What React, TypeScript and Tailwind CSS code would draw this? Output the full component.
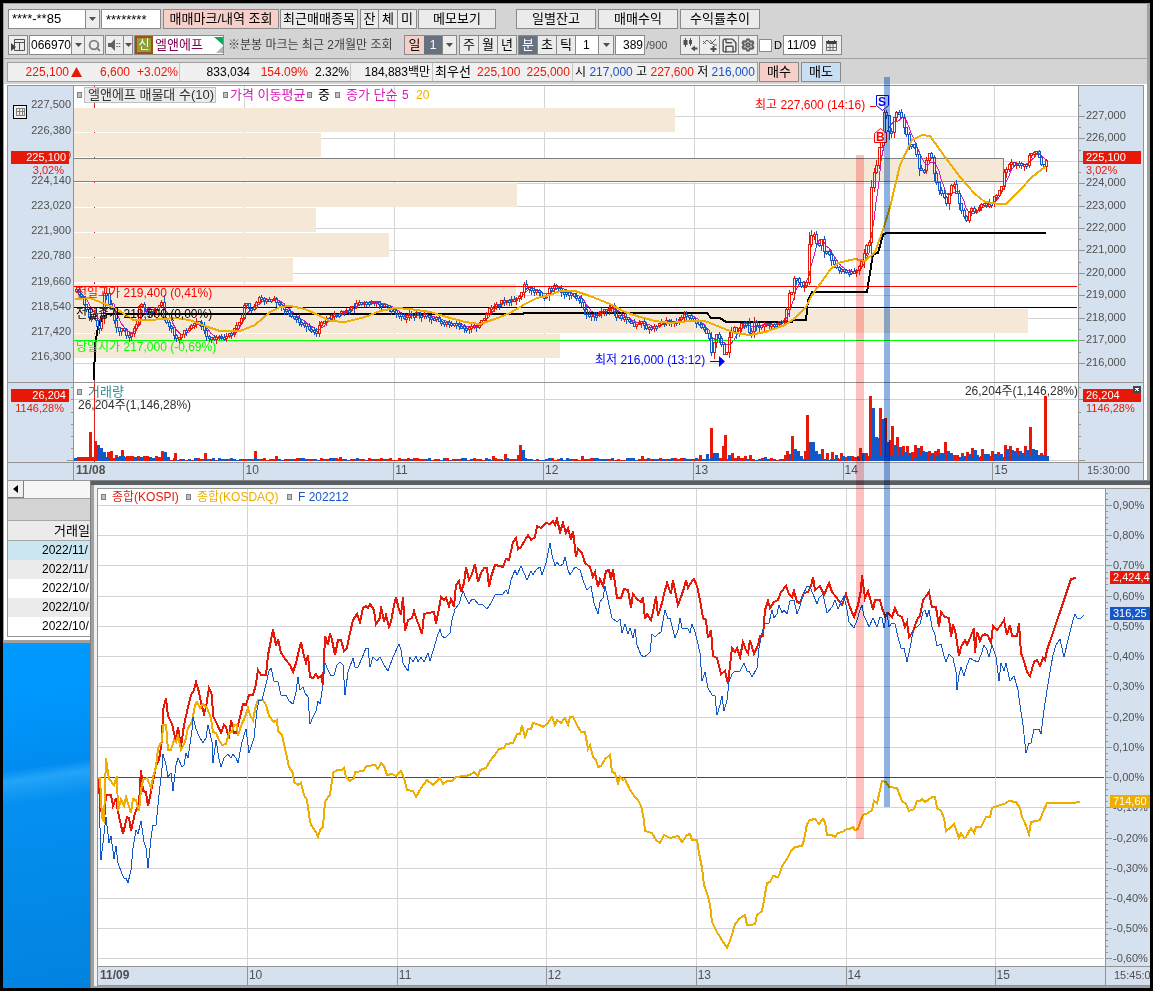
import React from "react";
import { Search, Save, Settings, CalendarDays } from "lucide-react";

type Point = [number, number];

const parse = (text: string): Point[] =>
  text
    .trim()
    .split(/\s+/)
    .map((pair) => pair.split(",").map(Number) as Point);

const toPath = (points: Point[]) => "M" + points.map(([x, y]) => `${x} ${y}`).join("L");

const valueAt = (points: Point[], x: number) => {
  if (x <= points[0][0]) return points[0][1];
  for (let i = 1; i < points.length; i++) {
    const [x1, y1] = points[i];
    if (x <= x1) {
      const [x0, y0] = points[i - 1];
      return y0 + ((y1 - y0) * (x - x0)) / (x1 - x0 || 1);
    }
  }
  return points[points.length - 1][1];
};

const noise = (n: number) => {
  const s = Math.sin(n * 12.9898) * 43758.5453;
  return s - Math.floor(s);
};

/* ---------- price chart data ---------- */

const CLOSES = parse(`75,290 79,292 82,300 85,305 88,318 91,316 94,314 97,324 100,330 102,300 105,288 107,300 110,303
113,318 116,325 120,333 122,322 124,330 128,337 132,331 136,325 138,308 141,304 146,312 152,310 157,307 161,303 164,318
170,325 176,338 182,333 188,328 194,323 198,322 203,330 208,338 215,337 225,338 232,332 240,322 243,308 246,303 250,310
254,307 259,299 265,300 275,300 282,308 290,315 300,321 308,328 316,331 322,322 328,318 340,312 350,308 360,303 375,301
385,306 395,312 402,317 415,313 425,315 440,320 455,325 470,327 478,325 485,317 490,306 500,303 507,298 518,300 521,290
523,284 528,287 535,291 545,297 550,288 553,286 560,290 570,294 580,300 585,312 590,315 600,312 608,308 611,305 615,315
625,318 633,325 640,322 648,328 655,325 665,321 675,322 682,316 690,316 698,322 703,328 708,335 711,350 714,340 716,333
720,340 723,356 726,352 730,335 733,322 737,334 740,325 746,323 750,334 754,322 758,327 765,323 775,325 785,320 787,300
789,292 791,292 793,278 797,280 803,288 806,280 808,248 812,230 815,237 818,250 821,240 825,252 830,256 835,266 840,270
850,271 858,270 861,260 865,248 869,243 871,186 874,170 877,160 880,138 883,116 885,110 887,120 890,137 893,118 896,111
900,110 903,125 907,135 910,147 913,141 916,155 920,170 924,168 928,150 932,160 937,188 943,195 947,207 950,185 954,184
958,200 962,214 966,218 970,208 975,212 980,204 990,205 995,195 1000,188 1005,168 1010,163 1020,163 1025,165 1030,155
1035,152 1039,156 1042,170 1046,159`);

const MA20 = parse(`75,299 90,298 100,302 110,306 120,311 133,320 150,320 175,318 190,320 205,326 220,331 240,331 255,325
270,312 280,307 290,306 305,309 320,316 330,321 345,322 365,317 380,311 395,308 410,309 430,312 450,318 465,322 480,324
495,319 510,313 525,304 537,298 550,295 560,291 575,291 590,296 610,304 625,312 640,317 655,321 670,323 690,321 705,321
720,327 735,333 750,335 765,332 785,325 795,318 806,307 812,295 820,284 830,270 838,263 855,259 865,261 875,252 883,230
890,207 900,165 912,140 922,135 930,136 945,157 960,177 975,194 985,202 1000,204 1006,204 1020,190 1032,177 1045,167`);

const BASELINE = parse(`94,380 95,345 98,327 102,318 107,314 523,314 524,313 707,313 711,318 720,318 726,322 792,322
793,320 806,320 808,300 812,292 867,292 873,254 878,253 883,235 886,233 1046,233`);

const PROFILE: [number, number][] = [
  [108, 675], [133, 321], [158, 1004], [183, 517], [208, 316],
  [233, 389], [258, 293], [284, 516], [309, 1028], [334, 560],
];

function buildCandles() {
  let up = "";
  let down = "";
  const closes: Point[] = [];
  let open = CLOSES[0][1];
  for (let i = 0; 76 + i * 2.5 <= 1046; i++) {
    const x = Math.round(76 + i * 2.5);
    const close = Math.round(valueAt(CLOSES, x) + (noise(i) - 0.5) * 4);
    const top = Math.min(open, close);
    const bottom = Math.max(open, close, top + 2);
    const high = top - Math.round(noise(i + 500) * (4 + (bottom - top) / 4));
    const low = bottom + Math.round(noise(i + 900) * (4 + (bottom - top) / 4));
    const shape = `M${x - 1} ${top}h2V${bottom}h-2ZM${x} ${high}V${top}M${x} ${bottom}V${low}`;
    if (close < open) up += shape;
    else down += shape;
    closes.push([x, close]);
    open = close;
  }
  const ma5: Point[] = closes.map(([x], i) => {
    const part = closes.slice(Math.max(0, i - 4), i + 1);
    return [x, part.reduce((sum, p) => sum + p[1], 0) / part.length];
  });
  return { up, down, ma5: toPath(ma5) };
}

const PEAKS: [number, number, number][] = [
  [90, 29, 1], [95, 20, 1], [98, 16, 0], [101, 13, 0], [104, 9, 0], [108, 9, 1], [111, 10, 1], [116, 6, 1], [122, 11, 1],
  [127, 5, 1], [162, 10, 1], [165, 9, 0], [175, 8, 1], [205, 8, 1], [255, 10, 1], [276, 5, 1], [340, 4, 1], [505, 7, 1],
  [493, 5, 1], [518, 6, 1], [520, 16, 1], [523, 11, 0], [582, 5, 1], [642, 5, 1], [700, 6, 1], [707, 7, 0], [711, 33, 1],
  [714, 8, 0], [717, 8, 0], [723, 15, 1], [725, 26, 1], [729, 6, 0], [732, 8, 1], [738, 5, 1], [745, 5, 1], [750, 6, 1],
  [765, 4, 0], [785, 6, 1], [787, 10, 1], [790, 7, 0], [792, 25, 1], [795, 12, 0], [798, 10, 0], [801, 5, 0], [805, 10, 1],
  [807, 46, 1], [810, 19, 0], [813, 19, 0], [816, 10, 0], [819, 7, 0], [822, 12, 1], [827, 8, 1], [832, 9, 1], [836, 6, 0],
  [841, 8, 1], [848, 5, 1], [858, 5, 1], [860, 13, 1], [863, 8, 0], [866, 8, 1], [870, 65, 1], [873, 53, 0], [876, 24, 0],
  [878, 23, 0], [880, 53, 1], [883, 42, 0], [885, 43, 1], [887, 19, 0], [890, 21, 1], [892, 35, 1], [895, 16, 0],
  [897, 24, 1], [900, 14, 0], [903, 15, 1], [905, 9, 0], [907, 15, 1], [910, 8, 0], [912, 9, 1], [915, 16, 1], [918, 13, 0],
  [921, 15, 1], [923, 10, 0], [926, 9, 0], [929, 10, 1], [932, 8, 0], [935, 10, 1], [938, 12, 1], [941, 8, 0], [943, 8, 0],
  [945, 19, 1], [948, 10, 0], [951, 8, 0], [957, 6, 1], [962, 8, 1], [967, 9, 1], [970, 7, 0], [972, 13, 1], [975, 11, 0],
  [977, 6, 0], [982, 12, 1], [985, 7, 0], [988, 7, 0], [992, 10, 1], [995, 7, 0], [998, 9, 1], [1001, 7, 0], [1005, 16, 1],
  [1007, 12, 0], [1010, 15, 1], [1012, 11, 0], [1015, 10, 0], [1017, 13, 1], [1020, 10, 0], [1022, 8, 0], [1025, 15, 1],
  [1027, 11, 0], [1030, 34, 1], [1033, 12, 0], [1036, 11, 0], [1038, 6, 0], [1041, 8, 1], [1043, 6, 0], [1045, 65, 1],
];

function buildVolume() {
  let red = "";
  let blue = "";
  for (let x = 74; x < 1047; x += 3) {
    const early = x < 170 ? 2 : x > 840 ? 3 : 0;
    const h = 1 + early + Math.round(noise(x) * 2);
    const bar = `M${x} 461v${-h}h3v${h}Z`;
    if (noise(x + 77) > 0.5) red += bar;
    else blue += bar;
  }
  PEAKS.forEach(([x, h, isUp]) => {
    const bar = `M${x - 1} 461v${-h}h3v${h}Z`;
    if (isUp) red += bar;
    else blue += bar;
  });
  return { red, blue };
}

const candles = buildCandles();
const volume = buildVolume();
const PRICE_ROWS = [116, 138, 161, 183, 206, 228, 250, 273, 295, 318, 340, 363];

/* ---------- index comparison data ---------- */

const KOSPI = parse(`98,778 101,810 104,822 106,795 111,795 113,806 116,798 118,812 123,834 127,817 129,818 131,831 135,813
139,804 141,770 143,791 146,792 148,806 152,787 156,766 159,760 162,740 163,710 166,698 168,716 172,724 174,733 176,741
178,727 181,747 184,725 188,707 191,695 194,690 196,682 199,692 201,703 204,714 206,707 209,688 212,695 213,716 217,724
221,733 224,725 226,727 229,739 231,720 234,733 236,733 240,717 243,704 246,705 249,695 253,695 256,684 258,670 261,675
266,675 268,655 271,640 273,629 276,646 278,639 281,653 286,660 290,665 293,672 296,663 299,650 301,642 304,656 306,663
308,655 310,677 313,678 316,674 318,678 321,676 323,685 325,636 328,645 330,633 332,640 335,655 338,640 341,640 344,651
347,648 350,633 353,620 357,614 360,622 363,608 366,606 368,608 370,604 374,610 376,624 380,618 381,606 384,622 386,615
389,627 391,622 394,605 396,597 399,610 401,615 403,597 405,631 408,620 412,618 414,611 416,618 420,628 422,634 424,614
428,613 434,612 436,624 438,614 441,597 444,600 446,598 449,606 451,599 454,607 456,585 459,581 461,592 464,583 466,567
469,580 472,574 475,564 478,582 481,573 484,568 487,568 489,587 491,577 495,565 500,566 503,567 506,559 509,560 513,542
516,538 518,549 521,547 525,540 528,535 531,540 535,537 537,526 541,528 546,523 550,524 553,521 555,525 557,519 560,532
563,523 566,533 568,528 571,540 573,531 576,557 578,549 582,553 585,563 590,567 593,577 595,572 598,587 600,579 603,586
606,571 609,570 611,580 613,569 617,598 621,598 624,589 628,590 631,608 633,594 637,599 641,602 643,597 645,619 647,614
651,620 653,612 656,596 658,616 662,603 664,594 667,583 671,594 673,580 678,605 681,597 684,588 686,580 688,588 690,584
694,579 697,586 700,600 703,618 706,620 708,638 711,630 713,656 717,658 721,674 725,671 728,684 730,665 732,648 735,652
737,648 740,657 743,642 746,650 748,653 750,640 754,654 758,645 760,636 763,636 765,610 768,601 770,608 774,602 778,600
781,592 786,586 789,594 792,597 794,591 797,602 800,603 804,593 808,592 811,586 813,577 815,590 820,586 824,595 829,583
832,592 836,597 842,605 846,594 849,605 854,617 858,605 861,590 862,575 865,598 868,591 871,602 873,610 875,600 880,600
882,608 885,616 888,613 892,617 895,608 898,615 902,617 905,627 907,622 909,637 913,632 915,625 918,618 920,616 923,600
927,595 929,592 932,607 936,607 939,627 941,612 945,617 949,618 951,637 953,624 956,635 959,656 961,647 965,640 967,645
970,638 974,628 975,653 977,632 980,641 982,636 985,634 988,636 991,643 993,626 997,630 1001,625 1004,620 1007,635
1010,625 1012,636 1017,636 1019,623 1021,653 1024,661 1027,672 1030,676 1034,662 1037,660 1040,666 1043,658 1045,660
1047,650 1060,612 1071,579 1076,578`);

const FUTURES = parse(`99,795 101,860 106,817 109,843 111,836 114,859 116,846 118,863 122,874 124,878 126,878 128,883
131,870 133,848 136,830 138,834 141,821 144,842 146,848 148,868 151,838 153,825 156,825 159,795 162,768 163,754 166,765
168,777 171,773 173,791 176,765 178,758 182,767 184,765 186,753 188,758 192,730 193,717 196,729 199,736 203,743 206,738
208,725 212,742 213,763 216,740 219,759 221,767 224,758 228,754 231,758 233,754 236,758 238,763 242,742 246,729 249,753
252,744 254,738 257,710 259,700 262,700 266,684 269,671 271,668 274,681 278,682 281,695 286,695 289,701 293,704 296,692
298,677 300,690 303,687 305,693 308,697 310,724 313,717 316,711 318,701 320,704 323,685 325,663 328,670 331,676 334,675
337,665 340,662 343,665 345,695 348,672 353,658 355,667 358,667 362,658 366,648 368,648 370,667 373,657 377,661 380,657
384,665 388,671 393,657 399,644 401,650 403,663 406,668 408,671 410,657 413,662 416,656 418,662 421,657 424,662 428,653
430,661 434,648 437,637 440,629 442,636 445,638 450,633 452,620 455,609 459,604 463,591 466,598 469,604 472,599 475,600
478,604 483,605 487,609 491,603 495,595 503,594 506,590 508,594 511,580 515,570 517,575 521,566 524,573 527,580 531,571
533,575 536,570 540,567 542,575 546,563 550,543 552,555 555,566 557,562 560,566 563,564 565,557 568,570 570,575 575,567
580,570 584,583 587,590 591,586 594,603 598,614 600,602 603,598 605,586 608,600 612,618 617,622 620,619 622,633 625,624
628,634 630,628 633,638 635,629 637,645 641,655 644,657 647,655 650,652 652,634 655,637 658,634 661,632 665,610 668,619
670,618 673,630 675,638 678,630 680,618 682,628 688,629 690,633 692,624 695,632 697,640 700,653 702,681 705,672 708,688
712,695 715,696 717,715 720,705 722,696 724,711 727,700 729,682 732,674 735,671 740,671 744,663 747,671 749,671 752,677
757,668 759,648 764,624 769,623 772,610 774,618 777,614 779,605 782,613 784,610 787,614 790,601 794,600 797,614 800,606
803,595 807,586 810,587 813,594 817,604 819,598 823,594 827,613 832,607 835,600 838,609 842,600 844,596 847,610 849,622
854,628 857,620 860,610 862,605 864,616 867,622 869,627 873,618 877,627 880,617 882,618 884,628 887,612 889,627 892,623
895,624 898,637 901,648 904,648 907,662 910,648 914,627 917,627 920,624 923,612 925,610 927,617 929,610 932,627 935,635
937,646 941,644 944,656 946,662 949,654 953,658 956,672 957,690 959,675 961,667 964,676 967,665 970,658 973,660 978,662
981,655 984,645 987,650 989,657 992,645 996,657 999,681 1001,663 1004,671 1006,663 1010,681 1014,676 1018,690 1020,705
1023,725 1026,753 1029,743 1031,743 1034,729 1039,729 1041,734 1044,710 1047,690 1050,672 1053,655 1056,645 1060,639
1064,657 1068,640 1073,620 1075,614 1077,618 1081,618 1084,615`);

const KOSDAQ = parse(`98,778 100,778 102,818 104,821 106,758 109,779 114,785 117,776 118,811 121,799 124,806 126,797 131,813
133,799 136,800 139,811 141,790 143,780 147,778 151,788 153,777 156,767 158,748 162,741 163,725 166,725 168,750 171,750
174,740 176,742 178,736 181,750 185,742 188,728 192,722 195,705 197,702 200,708 203,704 207,708 211,718 213,732 216,733
219,740 222,745 226,744 229,733 232,732 234,725 237,725 238,736 241,726 245,717 248,708 250,715 253,720 256,705 258,700
263,700 266,705 269,716 274,722 277,720 278,731 282,735 286,753 289,767 293,773 294,782 298,785 301,783 304,795 307,800
309,815 311,825 316,832 318,837 320,830 323,827 325,802 328,797 330,795 333,773 337,770 342,770 344,768 346,777 350,781
354,778 355,772 363,771 367,766 375,765 378,769 381,763 384,766 387,775 392,774 396,776 401,771 404,778 407,790 413,791
416,797 421,788 427,780 433,785 440,778 443,784 447,781 452,781 456,777 465,776 470,775 474,772 478,776 480,770 486,768
490,761 494,756 499,749 504,748 506,744 513,743 517,734 520,734 522,725 525,737 528,729 531,729 533,723 540,725 543,727
547,724 552,717 555,725 557,720 561,723 565,718 568,725 570,717 573,717 577,725 581,732 585,732 588,749 590,745 593,757
596,760 598,767 601,766 605,759 610,755 612,772 615,773 618,783 620,777 623,780 625,779 630,790 635,797 638,800 641,806
644,820 645,831 652,833 656,840 660,843 664,835 670,838 678,836 682,842 687,835 690,834 692,840 697,840 699,853 702,868
704,885 707,893 710,905 712,922 717,932 722,940 727,948 731,938 735,924 740,918 745,915 747,925 751,925 755,924 757,915
762,911 764,900 767,883 770,882 773,876 778,877 780,873 782,866 787,859 791,851 795,847 802,846 804,840 807,824 810,820
815,819 819,824 823,819 825,822 827,835 832,835 835,837 838,833 842,832 847,829 850,829 853,827 855,830 858,829 860,822
863,815 868,813 872,810 874,801 877,803 880,790 882,781 886,782 889,787 897,788 902,801 906,804 909,811 914,809 917,801
920,801 922,799 925,802 928,800 932,797 935,797 937,808 941,811 944,818 946,831 950,828 954,824 957,832 959,838 961,833
964,838 966,837 971,828 974,833 976,827 981,827 986,817 990,817 992,808 997,806 1004,804 1009,801 1016,802 1020,808
1022,817 1025,823 1029,834 1031,822 1036,821 1040,820 1043,812 1047,803 1072,803 1080,802`);

const PERCENT_ROWS: [number, string][] = [
  [505, "0,90%"], [535, "0,80%"], [565, "0,70%"], [596, "0,60%"], [626, "0,50%"], [656, "0,40%"], [686, "0,30%"],
  [717, "0,20%"], [747, "0,10%"], [777, "0,00%"], [807, "-0,10%"], [838, "-0,20%"], [868, "-0,30%"], [898, "-0,40%"],
  [928, "-0,50%"], [958, "-0,60%"],
];

/* ---------- small controls ---------- */

const EDGE = "border border-[#8a8a8a]";

function Caret({ className = "" }: { className?: string }) {
  return (
    <span className={`flex h-full shrink-0 items-center justify-center border-l border-[#8a8a8a] bg-[#ededed] ${className}`}>
      <svg width="7" height="4" viewBox="0 0 7 4" aria-hidden="true">
        <path d="M0 0h7L3.5 4Z" fill="#505050" />
      </svg>
    </span>
  );
}

function ToolButton({ children, className = "", label }: { children: React.ReactNode; className?: string; label?: string }) {
  return (
    <button
      type="button"
      aria-label={label}
      className={`flex h-5 shrink-0 items-center justify-center whitespace-nowrap ${EDGE} text-[13px] leading-4 ${className}`}
    >
      {children}
    </button>
  );
}

function Marker() {
  return <span className="h-[6px] w-[5px] shrink-0 border border-[#808080] bg-[#c0c0c0]" />;
}

function Overlay({ x, className, children }: { x: number; className: string; children: React.ReactNode }) {
  return (
    <span
      className={`absolute whitespace-nowrap text-[12px] leading-[14px] ${className}`}
      style={{ left: `${((x - 74) / 1004) * 100}%` }}
    >
      {children}
    </span>
  );
}

/* ---------- toolbar ---------- */

function AccountRow() {
  return (
    <div className="flex h-5 items-center">
      <div className={`flex h-5 w-[92px] items-center bg-white ${EDGE}`}>
        <select aria-label="계좌" className="h-full min-w-0 flex-1 appearance-none pl-[3px] text-[13px] leading-4 outline-none">
          <option>****-**85</option>
        </select>
        <Caret className="w-[14px]" />
      </div>
      <input
        aria-label="비밀번호"
        defaultValue="********"
        className={`ml-px h-5 w-[60px] bg-white px-1 text-[13px] leading-4 ${EDGE}`}
      />
      <ToolButton className="ml-[2px] w-[116px] bg-[#f5cfc8]">매매마크/내역 조회</ToolButton>
      <ToolButton className="ml-px w-[78px] bg-[#ebebeb]">최근매매종목</ToolButton>
      <div className="ml-[2px] flex">
        <ToolButton className="w-[19px] bg-[#ebebeb]">잔</ToolButton>
        <ToolButton className="-ml-px w-5 bg-[#ebebeb]">체</ToolButton>
        <ToolButton className="-ml-px w-5 bg-[#ebebeb]">미</ToolButton>
      </div>
      <ToolButton className="ml-px w-[78px] bg-[#ebebeb]">메모보기</ToolButton>
      <div className="ml-5 flex gap-[2px]">
        <ToolButton className="w-20 bg-[#ebebeb]">일별잔고</ToolButton>
        <ToolButton className="w-20 bg-[#ebebeb]">매매수익</ToolButton>
        <ToolButton className="w-20 bg-[#ebebeb]">수익률추이</ToolButton>
      </div>
    </div>
  );
}

function PeriodRow() {
  return (
    <div className="flex h-5 items-center">
      <ToolButton label="패널" className="w-5 bg-[#ededed]">
        <svg width="14" height="14" viewBox="0 0 14 14" aria-hidden="true">
          <path d="M3.500 1.500H13.500V12.500H3.500ZM3.500 4.500H13.500M8.500 4.500V12.500" fill="none" stroke="#505050" />
          <path d="M0 5l5 4-5 4Z" fill="#404040" />
        </svg>
      </ToolButton>
      <div className={`ml-px flex h-5 w-[75px] bg-white ${EDGE}`}>
        <input aria-label="종목코드" defaultValue="066970" className="h-full min-w-0 flex-1 pl-px text-[12px] leading-4 outline-none" />
        <Caret className="w-[13px]" />
        <button type="button" aria-label="종목검색" className="flex w-[19px] items-center justify-center border-l border-[#8a8a8a] bg-[#ededed]">
          <Search size={13} strokeWidth={3.5} color="#808080" />
        </button>
      </div>
      <div className={`ml-px flex h-5 w-[28px] bg-[#ededed] ${EDGE}`}>
        <button type="button" aria-label="음성" className="flex flex-1 items-center justify-center">
          <svg width="14" height="12" viewBox="0 0 14 12" aria-hidden="true">
            <path d="M0 4h3l4-4v12l-4-4H0Z" fill="#606060" />
            <path d="M9 4v1M9 7v1M11.500 4v1M11.500 7v1" stroke="#606060" strokeWidth="1.500" />
          </svg>
        </button>
        <Caret className="w-[9px]" />
      </div>
      <div className={`relative ml-px flex h-5 w-[90px] bg-white ${EDGE}`}>
        <span className="flex w-[18px] items-center justify-center border-2 border-[#a05010] bg-[#8f9e38] text-[12px] leading-4 text-white">신</span>
        <span className="pl-[2px] text-[13px] leading-[17px] text-[#800050]">엘앤에프</span>
        <svg className="absolute right-0 top-0" width="9" height="18" viewBox="0 0 9 18" aria-hidden="true">
          <path d="M0 1H9V9Z" fill="#10a858" />
          <path d="M9 10V17H2Z" fill="#b4b4b4" />
        </svg>
      </div>
      <span className="ml-1 w-[176px] whitespace-nowrap text-[12px] leading-4 text-[#404040]">※분봉 마크는 최근 2개월만 조회</span>
      <div className={`flex h-5 w-[53px] ${EDGE}`}>
        <button type="button" className="w-[19px] bg-[#f5cfc8] text-[13px] leading-4">일</button>
        <button type="button" className="w-[18px] bg-[#66727f] text-[12px] leading-4 text-white">1</button>
        <Caret className="flex-1" />
      </div>
      <div className="ml-[2px] flex">
        <ToolButton className="w-5 bg-[#ebebeb]">주</ToolButton>
        <ToolButton className="-ml-px w-5 bg-[#ebebeb]">월</ToolButton>
        <ToolButton className="-ml-px w-5 bg-[#ebebeb]">년</ToolButton>
      </div>
      <div className="ml-px flex">
        <ToolButton className="w-5 bg-[#66727f] text-white">분</ToolButton>
        <ToolButton className="-ml-px w-5 bg-[#ebebeb]">초</ToolButton>
        <ToolButton className="-ml-px w-5 bg-[#ebebeb]">틱</ToolButton>
        <div className={`-ml-px flex h-5 w-[39px] bg-white ${EDGE}`}>
          <select aria-label="분 단위" className="h-full min-w-0 flex-1 appearance-none pl-[7px] text-[12px] leading-4 outline-none">
            <option>1</option>
          </select>
          <Caret className="w-[15px]" />
        </div>
      </div>
      <input aria-label="조회 개수" defaultValue="389" className={`ml-px h-5 w-[30px] bg-white pr-px text-right text-[12px] leading-4 ${EDGE}`} />
      <span className="ml-px w-[34px] text-[11px] leading-4 text-[#505050]">/900</span>
      <div className="flex">
        <ToolButton label="캔들 추가" className="w-5 bg-[#ededed]">
          <svg width="16" height="16" viewBox="0 0 16 16" aria-hidden="true">
            <path d="M3.500 1v9M8.500 1v8" stroke="#505050" />
            <path d="M1.500 3h4v5h-4ZM7 3h3v4H7Z" fill="#505050" />
            <path d="M9 11.500l4-3v2h2.500v2H13v2Z" fill="#505050" />
          </svg>
        </ToolButton>
        <ToolButton label="지표 추가" className="-ml-px w-[21px] bg-[#ededed]">
          <svg width="16" height="16" viewBox="0 0 16 16" aria-hidden="true">
            <path d="M1 7l4-4 4 4 5-5M1 4l3 3M8 3l4 5h3" fill="none" stroke="#606060" />
            <path d="M11.500 9v6M8.500 12h6" stroke="#505050" strokeWidth="2" />
          </svg>
        </ToolButton>
        <ToolButton label="저장" className="-ml-px w-5 bg-[#ededed]">
          <Save size={17} strokeWidth={2} color="#505050" />
        </ToolButton>
        <ToolButton label="설정" className="-ml-px w-5 bg-[#ededed]">
          <Settings size={14} strokeWidth={3.5} color="#606060" />
        </ToolButton>
      </div>
      <label className="ml-px flex items-center gap-[2px] text-[11px] leading-4">
        <input type="checkbox" className="h-[13px] w-[13px] appearance-none border border-[#8a8a8a] bg-white" />D
      </label>
      <div className={`ml-px flex h-5 w-[59px] bg-white ${EDGE}`}>
        <input aria-label="날짜" defaultValue="11/09" className="min-w-0 flex-1 pl-[3px] text-[12px] leading-4 outline-none" />
        <button type="button" aria-label="달력" className="flex w-[19px] items-center justify-center border-l border-[#8a8a8a] bg-[#ededed]">
          <svg width="11" height="11" viewBox="0 0 11 11" aria-hidden="true">
            <path d="M0 1h11v3H0ZM2 0h1v2H2ZM8 0h1v2H8Z" fill="#404040" />
            <path d="M.5 2V10.500H10.500V2M0 7.500H11M4 4v6M7 4v6" fill="none" stroke="#707070" />
          </svg>
        </button>
      </div>
    </div>
  );
}

function QuoteRow() {
  return (
    <div className="flex h-5 items-center">
      <div className="-ml-px flex h-5 w-[751px] items-center whitespace-nowrap border border-[#a0a0a0] bg-[#f0f0f0] text-right text-[12px] leading-4">
        <div className="flex h-full w-[172px] items-center border-r border-[#c4c4c4] text-[#e81808]">
          <span className="w-[61px]">225,100</span>
          <svg className="ml-[2px]" width="11" height="10" viewBox="0 0 11 10" aria-hidden="true">
            <path d="M5.500 0L11 10H0Z" fill="#e81808" />
          </svg>
          <span className="w-[48px]">6,600</span>
          <span className="w-[48px]">+3.02%</span>
        </div>
        <div className="flex h-full w-[171px] items-center border-r border-[#c4c4c4]">
          <span className="w-[70px]">833,034</span>
          <span className="w-[58px] text-[#e81808]">154.09%</span>
          <span className="w-[41px]">2.32%</span>
        </div>
        <div className="flex h-full w-[82px] items-center justify-end border-r border-[#c4c4c4] pr-[2px]">184,883백만</div>
        <div className="flex h-full w-[140px] items-center justify-between border-r border-[#c4c4c4] px-[2px]">
          <span className="text-left text-[13px]">최우선</span>
          <span className="text-[#e81808]">225,100</span>
          <span className="text-[#e81808]">225,000</span>
        </div>
        <div className="flex flex-1 items-center justify-between px-[2px]">
          <span>시</span>
          <span className="text-[#1850c8]">217,000</span>
          <span>고</span>
          <span className="text-[#e81808]">227,600</span>
          <span>저</span>
          <span className="text-[#1850c8]">216,000</span>
        </div>
      </div>
      <ToolButton className="ml-px w-10 bg-[#f5cfc8]">매수</ToolButton>
      <ToolButton className="ml-[2px] w-10 bg-[#c8def2]">매도</ToolButton>
    </div>
  );
}

/* ---------- price chart ---------- */

function LeftAxis() {
  const labels: [number, string][] = [
    [104, "227,500"], [130, "226,380"], [155, "225,260"], [180, "224,140"], [205, "223,020"], [230, "221,900"],
    [255, "220,780"], [281, "219,660"], [306, "218,540"], [331, "217,420"], [356, "216,300"],
  ];
  return (
    <svg className="block shrink-0 bg-[#d6e1ef]" width="65" height="376" viewBox="8 86 65 376" shapeRendering="crispEdges">
      <g fill="#505050" fontSize="11" textAnchor="end">
        {labels.map(([y, text]) => (
          <text key={text} x="71" y={y + 4}>{text}</text>
        ))}
      </g>
      <rect x="13.500" y="105.500" width="13" height="13" fill="#f0f0f0" stroke="#000" />
      <path d="M16 108.500h9M16 111.500h9M16 115.500h9M16.500 108v8M19.500 108v8M22.500 108v8M24.500 108v8" stroke="#808080" />
      <rect x="11" y="151" width="58" height="13" fill="#e81808" />
      <text x="66" y="161" fill="#fff" fontSize="11" textAnchor="end">225,100</text>
      <text x="64" y="174" fill="#e81808" fontSize="11" textAnchor="end">3,02%</text>
      <path d="M8 382.500h65M71 387.500h3M71 399.500h3M71 412.500h3M71 424.500h3M71 436.500h3M71 448.500h3M67 460.500h6" stroke="#949494" />
      <rect x="11" y="389" width="58" height="13" fill="#e81808" />
      <text x="66" y="399" fill="#fff" fontSize="11" textAnchor="end">26,204</text>
      <text x="64" y="412" fill="#e81808" fontSize="11" textAnchor="end">1146,28%</text>
    </svg>
  );
}

function RightAxis() {
  return (
    <svg className="block shrink-0 bg-[#d6e1ef]" width="64" height="376" viewBox="1079 86 64 376" shapeRendering="crispEdges">
      {PRICE_ROWS.map((y, i) => (
        <g key={y}>
          <path d={`M1079 ${y + 0.5}h6M1079 ${y - 10.5}h2`} stroke="#949494" />
          {i !== 2 && <text x="1086" y={y + 3} fill="#505050" fontSize="11">{`${227 - i},000`}</text>}
        </g>
      ))}
      <rect x="1083" y="151" width="58" height="13" fill="#e81808" />
      <text x="1086" y="161" fill="#fff" fontSize="11">225,100</text>
      <text x="1086" y="174" fill="#e81808" fontSize="11">3,02%</text>
      <path d="M1079 382.500h64M1079 387.500h2M1079 399.500h4M1079 412.500h2M1079 424.500h2M1079 436.500h2M1079 448.500h2M1079 460.500h6" stroke="#949494" />
      <rect x="1083" y="389" width="58" height="13" fill="#e81808" />
      <text x="1086" y="399" fill="#fff" fontSize="11">26,204</text>
      <text x="1086" y="412" fill="#e81808" fontSize="11">1146,28%</text>
      <rect x="1133" y="386" width="8" height="7" fill="#404850" />
      <path d="M1135 388l4 3M1139 388l-4 3" stroke="#fff" />
    </svg>
  );
}

function PricePlot() {
  return (
    <div className="relative min-w-0 flex-1 border-x border-[#949494]">
      <svg className="block h-[376px] w-full" viewBox="74 86 1004 376" preserveAspectRatio="none" shapeRendering="crispEdges">
        <path d="M244.500 86V462M394.500 86V462M544.500 86V462M694.500 86V462M844.500 86V462M994.500 86V462" stroke="#d4d4d4" />
        <path d={PRICE_ROWS.map((y) => `M74 ${y + 0.5}H1077`).join("") + "M74 399.500H1077M74 460.500H1077"} stroke="#d4d4d4" />
        <path d="M94.500 86V462" stroke="#e02020" />
        {PROFILE.map(([y, end]) => (
          <rect key={y} x="74" y={y} width={end - 74} height="24" fill="#f6e8d6" />
        ))}
        <rect x="73.500" y="158.500" width="930" height="23" fill="none" stroke="#808080" />
        <path d="M74 382.500H1078" stroke="#949494" />
        <path d={candles.ma5} fill="none" stroke="#d818b8" />
        <path d={toPath(BASELINE)} fill="none" stroke="#000" strokeWidth="2" />
        <path d="M74 286.500H1077" stroke="#f00" />
        <path d="M74 307.500H1077" stroke="#000" />
        <path d="M74 340.500H1077" stroke="#0f0" />
        <g transform="translate(.5 .5)" fill="none">
          <path d={candles.up} stroke="#e81808" />
          <path d={candles.down} stroke="#1458c8" />
        </g>
        <path d={toPath(MA20)} fill="none" stroke="#eeae00" strokeWidth="2" />
        <path d={volume.red} fill="#e81808" />
        <path d={volume.blue} fill="#1458c8" />
        <g shapeRendering="auto">
          <path d="M710 361.500h9" stroke="#00f" />
          <path d="M719 356l6 5.500-6 5.500Z" fill="#00f" />
          <path d="M870 106.500h6" stroke="#f00" />
          <path d="M876.500 95.500h12v10l-6 5-6-5Z" fill="#fff" stroke="#00f" />
          <path d="M874.500 142.500h12v-9l-6-5-6 5Z" fill="#fff" stroke="#f00" />
        </g>
      </svg>
      <div className="absolute left-[3px] top-px flex items-center whitespace-nowrap text-[13px] leading-4">
        <Marker />
        <span className="ml-[2px] w-[132px] border border-[#c0c0c0] bg-[#ebebeb] px-[3px] leading-[14px] text-[#303030]">엘앤에프 매물대 수(10)</span>
        <span className="ml-[7px]"><span className="block h-[6px] w-[5px] border border-[#808080] bg-[#c0c0c0]" /></span>
        <span className="ml-[2px] w-[77px] text-[#d818b8]">가격 이동평균</span>
        <Marker />
        <span className="ml-[6px] w-[17px]">중</span>
        <Marker />
        <span className="ml-[6px] w-[56px] text-[#d818b8]">종가 단순</span>
        <span className="w-[14px] text-[12px] text-[#d818b8]">5</span>
        <span className="text-[12px] text-[#eeae00]">20</span>
      </div>
      <Overlay x={755} className="top-[12px] text-[#f00]">최고 227,600 (14:16)</Overlay>
      <Overlay x={595} className="top-[267px] text-[#00f]">최저 216,000 (13:12)</Overlay>
      <Overlay x={76} className="top-[200px] text-[#f00]">전일고가 219,400 (0,41%)</Overlay>
      <Overlay x={76} className="top-[221px] text-black">전일종가 218,500 (0,00%)</Overlay>
      <Overlay x={76} className="top-[254px] text-[#0f0]">당일시가 217,000 (-0,69%)</Overlay>
      <Overlay x={878} className="top-[9px] font-bold text-[#00f]">S</Overlay>
      <Overlay x={876} className="top-[44px] font-bold text-[#f00]">B</Overlay>
      <div className="absolute left-[3px] top-[298px] flex items-center gap-[6px] text-[13px] leading-4 text-[#2a9090]">
        <Marker />거래량
      </div>
      <Overlay x={78} className="top-[312px] text-[#303030]">26,204주(1,146,28%)</Overlay>
      <span className="absolute right-0 top-[298px] text-[12px] leading-[14px] text-[#303030]">26,204주(1,146,28%)</span>
    </div>
  );
}

function PriceChart() {
  return (
    <section className="mx-[3px] mt-px border border-[#949494]">
      <div className="flex">
        <LeftAxis />
        <PricePlot />
        <RightAxis />
      </div>
      <div className="flex h-[18px] border-t border-[#949494] bg-[#d6e1ef] text-[12px] leading-[15px] text-[#505050]">
        <div className="w-[65px] shrink-0" />
        <div className="flex min-w-0 flex-1 border-l border-[#949494]">
          <span className="grow-[170] basis-0 pl-[2px] font-bold">11/08</span>
          <span className="grow-[150] basis-0 border-l border-[#949494] pl-px">10</span>
          <span className="grow-[150] basis-0 border-l border-[#949494] pl-px">11</span>
          <span className="grow-[150] basis-0 border-l border-[#949494] pl-px">12</span>
          <span className="grow-[150] basis-0 border-l border-[#949494] pl-px">13</span>
          <span className="grow-[150] basis-0 border-l border-[#949494] pl-px">14</span>
          <span className="grow-[85] basis-0 border-l border-[#949494] pl-px">15</span>
        </div>
        <span className="w-[65px] shrink-0 border-l border-[#949494] pl-[8px] text-[11px]">15:30:00</span>
      </div>
    </section>
  );
}

/* ---------- trade history ---------- */

const DATES: [string, string][] = [
  ["2022/11/", "bg-[#cbe6f1]"],
  ["2022/11/", "bg-[#ebebeb]"],
  ["2022/10/", "bg-white"],
  ["2022/10/", "bg-[#ebebeb]"],
  ["2022/10/", "bg-white"],
];

function History() {
  return (
    <section className="ml-[3px] w-[84px] overflow-hidden border-b border-l border-[#949494] bg-[#d4d4d4]">
      <div className="flex h-[17px] bg-[#f6f6f6]">
        <button type="button" aria-label="왼쪽으로" className="flex w-4 items-center justify-center border-b border-r border-[#808080] bg-[#f0f0f0]">
          <svg width="5" height="8" viewBox="0 0 5 8" aria-hidden="true"><path d="M5 0v8L0 4Z" /></svg>
        </button>
      </div>
      <div className="h-[22px] border-t border-[#a0a0a0]" />
      <table className="w-full border-collapse text-left text-[12px] leading-[18px]">
        <thead>
          <tr className="h-5 border-y border-[#a8a8a8] bg-[#ebebeb] text-[13px]">
            <th scope="col" className="p-0 pl-[46px] font-normal">거래일</th>
          </tr>
        </thead>
        <tbody>
          {DATES.map(([date, tone], i) => (
            <tr key={i} className={`h-[19px] ${tone}`}>
              <td className="p-0 pl-[34px]">{date}</td>
            </tr>
          ))}
        </tbody>
      </table>
    </section>
  );
}

/* ---------- index chart ---------- */

function IndexWindow() {
  return (
    <section className="absolute left-[87px] right-0 top-[477px] border-l border-t border-[#808080] bg-[#f0f0f0]">
      <div className="h-1 bg-[#565e66]" />
      <div className="border-b-2 border-l-[3px] border-[#a0a0a0] pl-[3px] pt-[3px]">
        <div className="border border-r-0 border-[#949494]">
          <div className="flex bg-white">
            <div className="relative min-w-0 flex-1 border-r border-[#949494]">
              <svg className="block h-[477px] w-full" viewBox="98 489 1007 477" preserveAspectRatio="none" shapeRendering="crispEdges">
                <path d={PERCENT_ROWS.map(([y]) => `M98 ${y + 0.5}H1104`).join("")} stroke="#d4d4d4" />
                <path d="M98 777.500H1104" stroke="#f00000" />
                <path d="M247.500 489V966M397.500 489V966M546.500 489V966M696.500 489V966M846.500 489V966M995.500 489V966" stroke="#d4d4d4" />
                <path d={toPath(KOSPI)} fill="none" stroke="#e81808" strokeWidth="2" />
                <path d={toPath(KOSDAQ)} fill="none" stroke="#eeae00" strokeWidth="2" />
                <path d={toPath(FUTURES)} fill="none" stroke="#1458c8" />
              </svg>
              <div className="absolute left-[3px] top-0 flex items-center whitespace-nowrap text-[12px] leading-4">
                <Marker />
                <span className="ml-[6px] w-[74px] text-[#e81808]">종합(KOSPI)</span>
                <Marker />
                <span className="ml-[6px] w-[90px] text-[#eeae00]">종합(KOSDAQ)</span>
                <Marker />
                <span className="ml-[6px] text-[#1458c8]">F 202212</span>
              </div>
            </div>
            <svg className="block shrink-0 bg-[#d6e1ef]" width="44" height="477" viewBox="1106 489 44 477" shapeRendering="crispEdges">
              {PERCENT_ROWS.map(([y, text]) => (
                <g key={y}>
                  <path d={`M1106 ${y + 0.5}h6M1106 ${y - 5.5}h2M1106 ${y - 11.5}h2M1106 ${y - 17.5}h2M1106 ${y - 23.5}h2`} stroke="#949494" />
                  <text x="1113" y={y + 4} fill="#505050" fontSize="11">{text}</text>
                </g>
              ))}
              <rect x="1110" y="571" width="40" height="13" fill="#e81808" />
              <text x="1113" y="581" fill="#fff" fontSize="11">2,424,4</text>
              <rect x="1110" y="607" width="40" height="13" fill="#1458c8" />
              <text x="1113" y="617" fill="#fff" fontSize="11">316,25</text>
              <rect x="1110" y="795" width="40" height="13" fill="#eeae00" />
              <text x="1113" y="805" fill="#fff" fontSize="11">714,60</text>
            </svg>
          </div>
          <div className="flex h-[19px] border-t border-[#949494] bg-[#d6e1ef] text-[12px] leading-4 text-[#505050]">
            <div className="flex min-w-0 flex-1">
              <span className="grow-[149] basis-0 pl-[2px] font-bold">11/09</span>
              <span className="grow-[150] basis-0 border-l border-[#949494] pl-px">10</span>
              <span className="grow-[149] basis-0 border-l border-[#949494] pl-px">11</span>
              <span className="grow-[150] basis-0 border-l border-[#949494] pl-px">12</span>
              <span className="grow-[150] basis-0 border-l border-[#949494] pl-px">13</span>
              <span className="grow-[149] basis-0 border-l border-[#949494] pl-px">14</span>
              <span className="grow-[110] basis-0 border-l border-[#949494] pl-px">15</span>
            </div>
            <span className="w-[45px] shrink-0 overflow-hidden whitespace-nowrap border-l border-[#949494] pl-[8px] text-[11px]">15:45:0</span>
          </div>
        </div>
      </div>
    </section>
  );
}

export default function App() {
  return (
    <main className="min-h-screen bg-black p-[3px] font-['Liberation_Sans','Noto_Sans_CJK_KR',sans-serif] text-black">
      <div className="relative min-h-[985px] bg-[linear-gradient(172deg,#0099ff_0%,#0099ff_60%,#008cf0_67%,#22a4f8_68%,#0590f0_70%,#0078d4_100%)]">
        <section className="border-b-[3px] border-l border-r-[3px] border-t border-[#a0a0a0] bg-white">
          <header className="flex flex-col bg-[#d4d4d4] pl-1 pt-[5px]">
            <AccountRow />
            <div className="-ml-1 mt-[6px] border-b border-[#a0a0a0] pb-[3px] pl-1">
              <PeriodRow />
            </div>
            <div className="mt-[3px] pb-[2px]">
              <QuoteRow />
            </div>
          </header>
          <PriceChart />
          <History />
          <div className="h-[3px] bg-white" />
        </section>
        <IndexWindow />
        <div className="pointer-events-none absolute left-[853px] top-[152px] h-[684px] w-2 bg-[#ffc0c0] mix-blend-multiply" />
        <div className="pointer-events-none absolute left-[881px] top-[74px] h-[730px] w-[6px] bg-[#8eb2e2] mix-blend-multiply" />
      </div>
    </main>
  );
}
